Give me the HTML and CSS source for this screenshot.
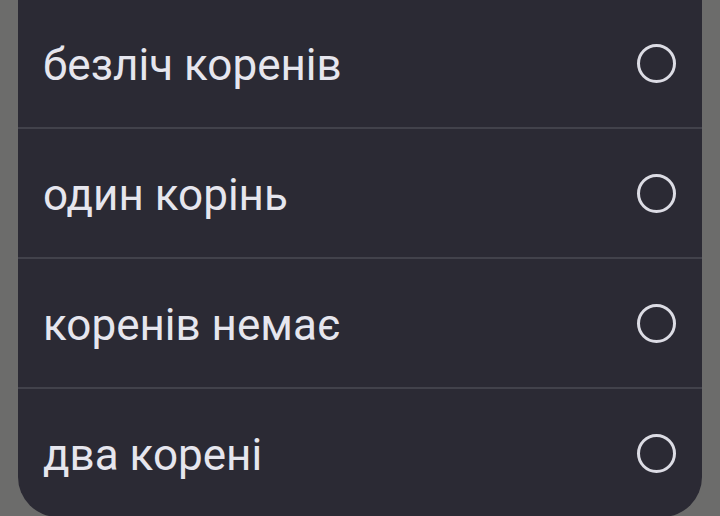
FILE: index.html
```html
<html>
    <head>
        <title>Варіанти відповіді</title>
        <meta charset="utf-8">
        <meta name="viewport" content="width=device-width, initial-scale=1">
        <link rel="stylesheet" href="styles.css">
    </head>
    <body>
        <div class="sheet">
            <label class="option">
                <span class="option-text">безліч коренів</span>
                <span class="radio"></span>
            </label>
            <label class="option">
                <span class="option-text">один корінь</span>
                <span class="radio"></span>
            </label>
            <label class="option">
                <span class="option-text">коренів немає</span>
                <span class="radio"></span>
            </label>
            <label class="option">
                <span class="option-text">два корені</span>
                <span class="radio"></span>
            </label>
        </div>
    </body>
</html>
```

FILE: styles.css
```css
body {
    margin: 0;
    width: 100%;
    height: 516px;
    overflow: hidden;
    font-family: Roboto, 'Noto Sans', sans-serif;
    background: #6c6c6b;
}

.sheet {
    margin: -1px 18px 0 18px;
    background: #2b2a34;
    border-radius: 0 0 40px 40px;
    display: flex;
    flex-direction: column;
}

.option {
    height: 128px;
    padding: 0 26px 0 25px;
    display: flex;
    align-items: center;
    justify-content: space-between;
    border-bottom: 2px solid #42424b;
    color: #e6e6ee;
    font-size: 44px;
}

.option:last-child {
    border-bottom: none;
}

.option-text {
    padding-top: 4px;
}

.radio {
    width: 33px;
    height: 33px;
    border: 3.5px solid #dcdce4;
    border-radius: 50%;
}
```
